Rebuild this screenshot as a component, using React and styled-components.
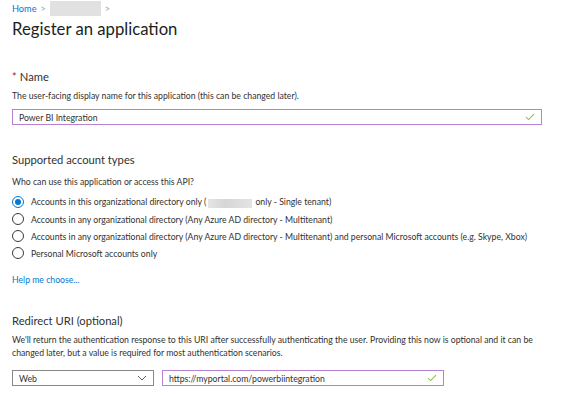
import React from "react";
import styled, { createGlobalStyle } from "styled-components";

const GlobalStyle = createGlobalStyle`
  html, body {
    margin: 0;
    padding: 0;
    background: #ffffff;
  }
  body {
    font-family: Lato, "Open Sans", sans-serif;
    color: #323130;
  }
`;

const Page = styled.div`
  width: 571px;
  height: 395px;
  padding: 0 12px;
  box-sizing: border-box;
  overflow: hidden;
`;

const Breadcrumb = styled.nav`
  display: flex;
  align-items: center;
  gap: 4px;
  height: 16px;
  font-size: 9.2px;

  a {
    color: #0078d4;
    text-decoration: none;
  }
`;

const Chevron = styled.span`
  color: #a19f9d;
  font-size: 9px;
`;

const Redacted = styled.span`
  display: inline-block;
  width: 51px;
  height: 15px;
  background: #e1e1e1;
`;

const Title = styled.h1`
  margin: 3px 0 0;
  font-size: 16.7px;
  font-weight: 400;
  line-height: 20px;
  color: #201f1e;
`;

const Section = styled.section`
  margin-top: ${(p) => p.$top || 0}px;
`;

const Heading = styled.h2`
  margin: 0;
  font-size: 11.2px;
  font-weight: 400;
  line-height: 14px;
  color: #323130;

  .req {
    color: #a4262c;
    margin-right: 3px;
  }
`;

const Desc = styled.p`
  margin: ${(p) => p.$top || 0}px 0 0;
  font-size: 8.7px;
  line-height: 13px;
  color: #323130;
  max-width: ${(p) => p.$max || "none"};
`;

const FieldWrap = styled.div`
  margin-top: 7px;
`;

const Field = styled.div`
  display: flex;
  align-items: center;
  box-sizing: border-box;
  width: ${(p) => p.$width}px;
  height: 16px;
  border: 1.5px solid #b782d1;
  padding: 0 6px;
  font-size: 8.7px;
  color: #323130;
  background: #fff;
`;

const FieldText = styled.span`
  flex: 1;
`;

const Check = () => (
  <svg width="10" height="8" viewBox="0 0 10 8">
    <path d="M1 4.2 L3.6 6.6 L9 1.2" fill="none" stroke="#8cc152" strokeWidth="1.1" />
  </svg>
);

const RadioList = styled.div`
  display: flex;
  flex-direction: column;
  gap: 5px;
  margin-top: 8px;
`;

const RadioRow = styled.label`
  display: flex;
  align-items: center;
  gap: 7px;
  height: 12px;
  font-size: 8.7px;
  color: #323130;
`;

const RadioCircle = styled.span`
  width: 12px;
  height: 12px;
  box-sizing: border-box;
  border-radius: 50%;
  border: 1px solid ${(p) => (p.$checked ? "#0078d4" : "#3b3a39")};
  display: flex;
  align-items: center;
  justify-content: center;
  flex-shrink: 0;

  &::after {
    content: "";
    width: 6px;
    height: 6px;
    border-radius: 50%;
    background: ${(p) => (p.$checked ? "#0078d4" : "transparent")};
  }
`;

const Blur = styled.span`
  display: inline-block;
  width: 44px;
  height: 9px;
  margin: 0 3px 0 2px;
  vertical-align: middle;
  background: linear-gradient(90deg, #e4e4e4, #d6d6d6 40%, #e4e4e4);
`;

const Link = styled.a`
  display: block;
  margin-top: ${(p) => p.$top || 0}px;
  font-size: 8.7px;
  line-height: 12px;
  color: #0078d4;
  text-decoration: none;
`;

const Row = styled.div`
  display: flex;
  gap: 8px;
  margin-top: 11px;
`;

const Select = styled.div`
  display: flex;
  align-items: center;
  justify-content: space-between;
  box-sizing: border-box;
  width: 142px;
  height: 16px;
  border: 1px solid #8a8886;
  padding: 0 6px;
  font-size: 8.7px;
  color: #323130;
`;

const Caret = () => (
  <svg width="10" height="6" viewBox="0 0 10 6">
    <path d="M1 1 L5 5 L9 1" fill="none" stroke="#605e5c" strokeWidth="1" />
  </svg>
);

export default function App() {
  return (
    <>
      <GlobalStyle />
      <Page>
        <Breadcrumb>
          <a href="#">Home</a>
          <Chevron>&gt;</Chevron>
          <Redacted />
          <Chevron>&gt;</Chevron>
        </Breadcrumb>
        <Title>Register an application</Title>

        <Section $top={31}>
          <Heading>
            <span className="req">*</span>Name
          </Heading>
          <Desc $top={5}>
            The user-facing display name for this application (this can be changed later).
          </Desc>
          <FieldWrap>
            <Field $width={530}>
              <FieldText>Power BI Integration</FieldText>
              <Check />
            </Field>
          </FieldWrap>
        </Section>

        <Section $top={28}>
          <Heading>Supported account types</Heading>
          <Desc $top={8}>Who can use this application or access this API?</Desc>
          <RadioList>
            <RadioRow>
              <RadioCircle $checked />
              <span>
                Accounts in this organizational directory only (
                <Blur />
                only - Single tenant)
              </span>
            </RadioRow>
            <RadioRow>
              <RadioCircle />
              <span>
                Accounts in any organizational directory (Any Azure AD directory - Multitenant)
              </span>
            </RadioRow>
            <RadioRow>
              <RadioCircle />
              <span>
                Accounts in any organizational directory (Any Azure AD directory - Multitenant) and
                personal Microsoft accounts (e.g. Skype, Xbox)
              </span>
            </RadioRow>
            <RadioRow>
              <RadioCircle />
              <span>Personal Microsoft accounts only</span>
            </RadioRow>
          </RadioList>
          <Link href="#" $top={15}>
            Help me choose...
          </Link>
        </Section>

        <Section $top={28}>
          <Heading>Redirect URI (optional)</Heading>
          <Desc $top={5} $max="530px">
            We'll return the authentication response to this URI after successfully authenticating
            the user. Providing this now is optional and it can be changed later, but a value is
            required for most authentication scenarios.
          </Desc>
          <Row>
            <Select>
              <span>Web</span>
              <Caret />
            </Select>
            <Field $width={282}>
              <FieldText>https://myportal.com/powerbiintegration</FieldText>
              <Check />
            </Field>
          </Row>
        </Section>
      </Page>
    </>
  );
}
